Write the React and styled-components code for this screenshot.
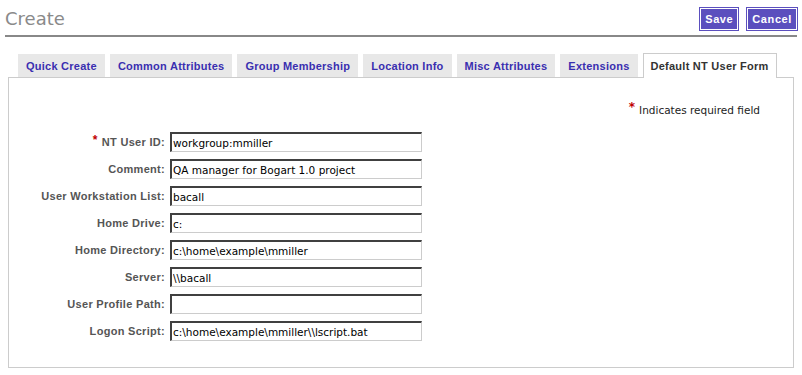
import React from "react";
import styled, { createGlobalStyle } from "styled-components";

const GlobalStyle = createGlobalStyle`
  body {
    margin: 0;
    background: #ffffff;
    font-family: "DejaVu Sans", "Liberation Sans", sans-serif;
  }
`;

const Page = styled.div`
  width: 802px;
  height: 375px;
  overflow: hidden;
  background: #fff;
`;

const Header = styled.div`
  display: flex;
  justify-content: space-between;
  align-items: flex-start;
  margin: 0 5px;
  padding-top: 7px;
  height: 28px;
  border-bottom: 2px solid #888888;
`;

const Title = styled.h1`
  margin: 0;
  font-family: "DejaVu Sans", sans-serif;
  font-weight: normal;
  font-size: 18px;
  line-height: 24px;
  color: #8a8a8a;
`;

const Actions = styled.div`
  display: flex;
  gap: 7px;
  margin-right: -1px;
`;

const Button = styled.button`
  height: 24px;
  padding: 0 5px;
  background: #5b4fbe;
  border: 1px solid #5b4fbe;
  box-shadow: inset 0 0 0 1px #ffffff;
  color: #ffffff;
  font-family: "Liberation Sans", sans-serif;
  font-weight: bold;
  font-size: 11px;
  letter-spacing: 0.6px;
  cursor: pointer;
`;

const Body = styled.div`
  margin: 16px 8px 0 8px;
`;

const TabBar = styled.div`
  display: flex;
  gap: 5px;
  padding-left: 10px;
  align-items: flex-end;
  height: 24px;
`;

const Tab = styled.div`
  height: ${(p) => (p.$active ? "25px" : "23px")};
  padding: 0 ${(p) => (p.$active ? "7px" : "8px")};
  display: flex;
  align-items: center;
  box-sizing: border-box;
  background: ${(p) => (p.$active ? "#ffffff" : "#e8e8e8")};
  border: ${(p) => (p.$active ? "1px solid #cccccc" : "none")};
  border-bottom: none;
  margin-bottom: ${(p) => (p.$active ? "-1px" : "0")};
  position: relative;
  color: ${(p) => (p.$active ? "#333333" : "#3a2fb0")};
  font-family: "Liberation Sans", sans-serif;
  font-weight: bold;
  font-size: 11px;
  letter-spacing: 0.25px;
  white-space: nowrap;
`;

const Panel = styled.div`
  border: 1px solid #cccccc;
  height: 291px;
  box-sizing: border-box;
  padding: 26px 33px 0 0;
`;

const Note = styled.div`
  text-align: right;
  font-size: 10.5px;
  color: #222;
  line-height: 12px;
  margin-bottom: 16px;
`;

const Star = styled.span`
  display: inline-block;
  color: #c00000;
  font-weight: bold;
  font-size: 12px;
  line-height: 1;
  vertical-align: top;
  margin-top: ${(p) => (p.$inLabel ? "2px" : "-3px")};
  margin-right: 4px;
`;

const Form = styled.div`
  display: grid;
  grid-template-columns: 156px 252px;
  grid-auto-rows: 20px;
  column-gap: 5px;
  row-gap: 7px;
`;

const Label = styled.label`
  text-align: right;
  font-family: "Liberation Sans", sans-serif;
  font-weight: bold;
  font-size: 11px;
  letter-spacing: 0.3px;
  color: #555555;
  line-height: 20px;
  white-space: nowrap;
`;

const Input = styled.input`
  width: 252px;
  height: 20px;
  box-sizing: border-box;
  margin: 0;
  padding: 0 1px;
  border-style: solid;
  border-width: 2px 1px 1px 2px;
  border-color: #404040 #cccccc #cccccc #404040;
  font-family: "DejaVu Sans", sans-serif;
  font-size: 10.5px;
  color: #000;
  outline: none;
`;

const tabs = [
  "Quick Create",
  "Common Attributes",
  "Group Membership",
  "Location Info",
  "Misc Attributes",
  "Extensions",
  "Default NT User Form",
];

const fields = [
  { label: "NT User ID:", value: "workgroup:mmiller", required: true },
  { label: "Comment:", value: "QA manager for Bogart 1.0 project" },
  { label: "User Workstation List:", value: "bacall" },
  { label: "Home Drive:", value: "c:" },
  { label: "Home Directory:", value: "c:\\home\\example\\mmiller" },
  { label: "Server:", value: "\\\\bacall" },
  { label: "User Profile Path:", value: "" },
  { label: "Logon Script:", value: "c:\\home\\example\\mmiller\\\\lscript.bat" },
];

export default function App() {
  return (
    <Page>
      <GlobalStyle />
      <Header>
        <Title>Create</Title>
        <Actions>
          <Button>Save</Button>
          <Button>Cancel</Button>
        </Actions>
      </Header>
      <Body>
        <TabBar>
          {tabs.map((t, i) => (
            <Tab key={t} $active={i === tabs.length - 1}>
              {t}
            </Tab>
          ))}
        </TabBar>
        <Panel>
          <Note>
            <Star>*</Star>Indicates required field
          </Note>
          <Form>
            {fields.map((f) => (
              <React.Fragment key={f.label}>
                <Label>
                  {f.required && <Star $inLabel>*</Star>}
                  {f.label}
                </Label>
                <Input defaultValue={f.value} />
              </React.Fragment>
            ))}
          </Form>
        </Panel>
      </Body>
    </Page>
  );
}
